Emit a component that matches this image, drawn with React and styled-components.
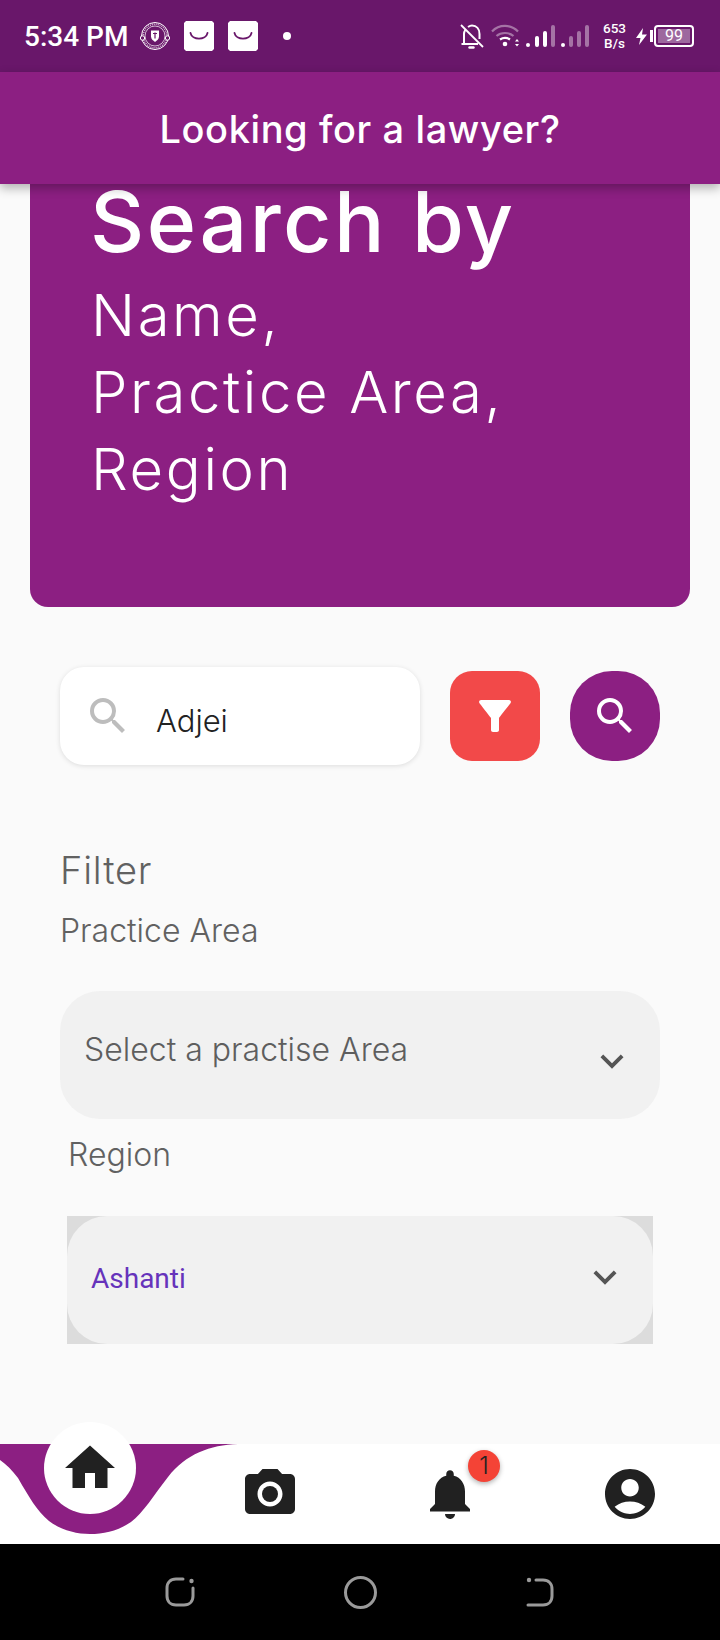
import styled, { createGlobalStyle } from "styled-components";
import { MdHome, MdCameraAlt, MdNotifications, MdAccountCircle, MdSearch, MdFilterAlt, MdKeyboardArrowDown } from "react-icons/md";

const PURPLE = "#8c1f82";
const TEXT_FONT = `"Inter", "Open Sans", sans-serif`;

const GlobalStyle = createGlobalStyle`
  html, body {
    margin: 0;
    padding: 0;
    background: #000;
  }
  * {
    box-sizing: border-box;
  }
`;

function App() {
  return (
    <>
      <GlobalStyle />
      <Screen>
        <StatusBar>
          <StatusLeft>
            <Time>5:34 PM</Time>
            <CrestIcon />
            <ShopIcon />
            <ShopIcon />
            <Dot />
          </StatusLeft>
          <StatusRight>
            <MutedBell />
            <WifiIcon />
            <SignalBars />
            <Speed>
              <span>653</span>
              <span>B/s</span>
            </Speed>
            <BatteryIcon />
          </StatusRight>
        </StatusBar>
        <AppBar>Looking for a lawyer?</AppBar>
        <Content>
          <Hero>
            <HeroTitle>Search by</HeroTitle>
            <HeroLine>Name,</HeroLine>
            <HeroLine>Practice Area,</HeroLine>
            <HeroLine>Region</HeroLine>
          </Hero>
          <SearchRow>
            <SearchBox>
              <MdSearch size={48} color="#bdbdbd" />
              <SearchText>Adjei</SearchText>
            </SearchBox>
            <FilterButton>
              <MdFilterAlt size={48} color="#fff" />
            </FilterButton>
            <SearchButton>
              <MdSearch size={48} color="#fff" />
            </SearchButton>
          </SearchRow>
          <FilterTitle>Filter</FilterTitle>
          <FieldLabel>Practice Area</FieldLabel>
          <PracticeSelect>
            <Placeholder>Select a practise Area</Placeholder>
            <SelectArrow $shift={6}>
              <MdKeyboardArrowDown size={46} color="#555" />
            </SelectArrow>
          </PracticeSelect>
          <RegionLabel>Region</RegionLabel>
          <RegionFrame>
            <RegionSelect>
              <RegionValue>Ashanti</RegionValue>
              <SelectArrow $shift={-3}>
                <MdKeyboardArrowDown size={46} color="#555" />
              </SelectArrow>
            </RegionSelect>
          </RegionFrame>
        </Content>
        <BottomNav>
          <NavCurve viewBox="0 0 240 90" preserveAspectRatio="none">
            <path d="M0 0H238C210 1 186 10 168 33C154 51 143 69 131 78C118 87 104 90 90 90C76 90 61 86 49 77C37 67 29 53 18 34C12 26 6 20 0 16Z" fill={PURPLE} />
          </NavCurve>
          <NavItem>
            <HomeBubble>
              <MdHome size={60} color="#212121" />
            </HomeBubble>
          </NavItem>
          <NavItem>
            <MdCameraAlt size={60} color="#212121" />
          </NavItem>
          <NavItem>
            <BellWrap>
              <MdNotifications size={60} color="#212121" />
              <Badge>1</Badge>
            </BellWrap>
          </NavItem>
          <NavItem>
            <MdAccountCircle size={60} color="#212121" />
          </NavItem>
        </BottomNav>
        <SystemBar>
          <RecentsKey />
          <HomeKey />
          <BackKey />
        </SystemBar>
      </Screen>
    </>
  );
}

function CrestIcon() {
  return (
    <svg width="30" height="30" viewBox="0 0 30 30" fill="none" stroke="#fff">
      <circle cx="15" cy="15" r="13.500" strokeWidth="1" />
      <circle cx="15" cy="15" r="10" strokeWidth="0.700" />
      <circle cx="15" cy="15" r="11.800" strokeWidth="1.600" strokeDasharray="1 1" opacity="0.7" />
      <path d="M11 9.500h8v6c0 2.500-2 4-4 5.500-2-1.500-4-3-4-5.500z" fill="#fff" stroke="none" />
      <path d="M13 12.500h4M15 11.500v6" stroke="#69176a" strokeWidth="1.200" />
      <circle cx="2.500" cy="17" r="2.200" fill="#69176a" strokeWidth="1" />
      <circle cx="27.500" cy="17" r="2.200" fill="#69176a" strokeWidth="1" />
    </svg>
  );
}

function ShopIcon() {
  return (
    <svg width="30" height="30" viewBox="0 0 30 30">
      <path d="M2 0H28L30 2V28L28 30H2L0 28V2Z" fill="#fff" />
      <path d="M6.500 12C8 19.500 22 19.500 23.500 12" fill="none" stroke="#69176a" strokeWidth="1.800" strokeLinecap="round" />
    </svg>
  );
}

function MutedBell() {
  return (
    <svg width="24" height="25" viewBox="0 0 24 25" fill="none" stroke="#fff" strokeWidth="2">
      <path d="M4 19.500V10C4 8 4.500 7 5.500 5.500M8 3C9 2.300 10.500 1.500 12 1.500C16.500 1.500 19.500 5 19.500 10V15M1.500 20H18" />
      <path d="M9.500 23.500H13.500" strokeWidth="2.400" strokeLinecap="round" />
      <path d="M1 1L23 23" strokeWidth="1.800" />
    </svg>
  );
}

function WifiIcon() {
  return (
    <svg width="28" height="24" viewBox="0 0 28 24" fill="none" stroke="#fff" strokeWidth="2.200">
      <path d="M1 7.500C8 0 20 0 27 7.500" opacity="0.4" />
      <path d="M5.500 12C10 8 18 8 22.500 12" opacity="0.4" />
      <path d="M9 15.500C12 13.500 16 13.500 19 15.500" />
      <circle cx="14" cy="20" r="2.300" fill="#fff" stroke="none" />
      <path d="M26 15L24 17.500H28ZM26 22.500L24 20H28Z" fill="#fff" stroke="none" />
    </svg>
  );
}

function SignalBars() {
  const bars = [
    [0, 4, 1],
    [9, 11, 1],
    [17, 16, 1],
    [25, 22, 0.4],
    [35, 4, 1],
    [43, 11, 0.4],
    [51, 16, 0.4],
    [59, 22, 0.4],
  ];
  return (
    <svg width="63" height="22" viewBox="0 0 63 22">
      {bars.map(([x, h, o]) => (
        <rect key={x} x={x} y={22 - h} width="4" height={h} rx="2" fill="#fff" opacity={o} />
      ))}
    </svg>
  );
}

function BatteryIcon() {
  return (
    <BatteryWrap>
      <svg width="11" height="17" viewBox="0 0 11 17">
        <path d="M7 0L0 10H4.500L3 17L11 6.500H6Z" fill="#fff" />
      </svg>
      <BatteryNub />
      <BatteryBody>
        <BatteryFill>99</BatteryFill>
      </BatteryBody>
    </BatteryWrap>
  );
}

const Screen = styled.div`
  width: 720px;
  height: 1640px;
  display: flex;
  flex-direction: column;
  overflow: hidden;
  background: #fafafa;
  font-family: ${TEXT_FONT};
`;

const StatusBar = styled.div`
  height: 72px;
  flex-shrink: 0;
  background: #69176a;
  color: #fff;
  padding: 0 26px 0 24px;
  display: flex;
  align-items: center;
  justify-content: space-between;
`;

const StatusLeft = styled.div`
  display: flex;
  align-items: center;
  gap: 14px;
`;

const StatusRight = styled.div`
  display: flex;
  align-items: center;
  gap: 7px;
`;

const Time = styled.span`
  margin-right: -2px;
  font-family: Roboto, sans-serif;
  font-size: 28px;
  font-weight: 500;
`;

const Dot = styled.span`
  width: 8px;
  height: 8px;
  margin-left: 11px;
  border-radius: 50%;
  background: #fff;
`;

const Speed = styled.div`
  display: flex;
  flex-direction: column;
  align-items: center;
  font-family: Roboto, sans-serif;
  font-size: 13.500px;
  font-weight: 500;
  line-height: 15px;
  margin: 0 3px 0 7px;
`;

const BatteryWrap = styled.div`
  display: flex;
  align-items: center;
`;

const BatteryNub = styled.span`
  width: 3px;
  height: 12px;
  margin: 0 1px 0 3px;
  background: #fff;
`;

const BatteryBody = styled.span`
  width: 40px;
  height: 22px;
  padding: 2px;
  border: 2px solid #fff;
  border-radius: 4px;
  display: flex;
`;

const BatteryFill = styled.span`
  flex: 1;
  background: rgba(255, 255, 255, 0.35);
  color: #fff;
  font-family: Roboto, sans-serif;
  font-size: 16px;
  line-height: 14px;
  text-align: center;
`;

const AppBar = styled.div`
  height: 112px;
  flex-shrink: 0;
  padding-top: 2px;
  background: ${PURPLE};
  color: #fff;
  font-size: 38px;
  font-weight: 500;
  letter-spacing: 0.6px;
  display: flex;
  align-items: center;
  justify-content: center;
  position: relative;
  z-index: 2;
  box-shadow: 0 4px 10px rgba(0, 0, 0, 0.3);
`;

const Content = styled.div`
  flex: 1;
  padding: 0 60px;
`;

const Hero = styled.div`
  height: 423px;
  margin: 0 -30px;
  padding: 0 60px 0 61px;
  background: ${PURPLE};
  color: #fff;
  border-radius: 0 0 18px 18px;
`;

const HeroTitle = styled.div`
  margin-bottom: 17px;
  margin-left: -1px;
  font-size: 84px;
  font-weight: 500;
  line-height: 76px;
  letter-spacing: 2.500px;
`;

const HeroLine = styled.div`
  font-size: 58px;
  font-weight: 300;
  line-height: 77px;
  letter-spacing: 2.600px;
`;

const SearchRow = styled.div`
  margin-top: 60px;
  display: flex;
  align-items: center;
`;

const SearchBox = styled.div`
  width: 360px;
  height: 98px;
  padding: 0 24px;
  background: #fff;
  border-radius: 24px;
  box-shadow: 0 1px 5px rgba(0, 0, 0, 0.12);
  display: flex;
  align-items: center;
`;

const SearchText = styled.span`
  margin: 8px 0 0 24px;
  color: #222;
  font-size: 31px;
  font-weight: 300;
`;

const FilterButton = styled.div`
  width: 90px;
  height: 90px;
  margin-left: 30px;
  background: #f24949;
  border-radius: 22px;
  display: flex;
  align-items: center;
  justify-content: center;
`;

const SearchButton = styled(FilterButton)`
  background: ${PURPLE};
  border-radius: 42px;
`;

const FilterTitle = styled.div`
  margin-top: 79px;
  color: #616161;
  font-size: 38px;
  font-weight: 300;
  line-height: 52px;
  letter-spacing: 0.8px;
`;

const FieldLabel = styled.div`
  margin-top: 13px;
  color: #616161;
  font-size: 32px;
  font-weight: 300;
  line-height: 44px;
`;

const PracticeSelect = styled.div`
  height: 128px;
  margin-top: 38px;
  padding: 0 25px 0 24px;
  background: #f1f1f1;
  border-radius: 40px;
  display: flex;
  align-items: center;
  justify-content: space-between;
`;

const Placeholder = styled.span`
  margin-bottom: 12px;
  color: #5e5e5e;
  font-size: 32px;
  font-weight: 300;
`;

const SelectArrow = styled.span`
  display: flex;
  transform: translateY(${(p) => p.$shift}px);
`;

const RegionLabel = styled(FieldLabel)`
  margin-top: 14px;
  padding-left: 8px;
`;

const RegionFrame = styled.div`
  margin: 39px 7px 0;
  background: #dcdcdc;
`;

const RegionSelect = styled(PracticeSelect)`
  margin-top: 0;
`;

const RegionValue = styled.span`
  margin-bottom: 4px;
  color: #6633bb;
  font-family: Roboto, sans-serif;
  font-size: 28px;
`;

const BottomNav = styled.div`
  height: 100px;
  flex-shrink: 0;
  background: #fff;
  display: grid;
  grid-template-columns: repeat(4, 180px);
  position: relative;
`;

const NavCurve = styled.svg`
  position: absolute;
  left: 0;
  top: 0;
  width: 240px;
  height: 90px;
`;

const NavItem = styled.div`
  display: flex;
  align-items: center;
  justify-content: center;
  position: relative;
`;

const HomeBubble = styled.div`
  position: absolute;
  left: 44px;
  top: -22px;
  width: 92px;
  height: 92px;
  border-radius: 50%;
  background: #fff;
  display: flex;
  align-items: center;
  justify-content: center;
`;

const BellWrap = styled.div`
  position: relative;
  display: flex;
`;

const Badge = styled.span`
  position: absolute;
  left: 48px;
  top: -14px;
  width: 32px;
  height: 32px;
  border-radius: 50%;
  background: #f44336;
  color: #222;
  font-size: 24px;
  font-weight: 300;
  line-height: 32px;
  text-align: center;
  box-shadow: 0 2px 5px rgba(0, 0, 0, 0.3);
`;

const SystemBar = styled.div`
  height: 96px;
  flex-shrink: 0;
  background: #000;
  padding: 0 166px 0 165px;
  display: flex;
  align-items: center;
  justify-content: space-between;
`;

function RecentsKey() {
  return (
    <svg width="30" height="30" viewBox="0 0 30 30" fill="none" stroke="#9a9a9a" strokeWidth="3">
      <path d="M18 2H11C5.500 2 2 5.500 2 11V19C2 24.500 5.500 28 11 28H19C24.500 28 28 24.500 28 19V11" strokeLinecap="round" />
      <circle cx="26.500" cy="4" r="2.200" fill="#9a9a9a" stroke="none" />
    </svg>
  );
}

const HomeKey = styled.span`
  width: 33px;
  height: 33px;
  border: 3px solid #9a9a9a;
  border-radius: 50%;
`;

function BackKey() {
  return (
    <svg width="28" height="30" viewBox="0 0 28 30" fill="none" stroke="#9a9a9a" strokeWidth="3">
      <path d="M10 3H17C22.500 3 26 6.500 26 12V19C26 24.500 22.500 28 17 28H2" strokeLinecap="round" />
      <circle cx="3" cy="3" r="2.200" fill="#9a9a9a" stroke="none" />
    </svg>
  );
}

export default App;
